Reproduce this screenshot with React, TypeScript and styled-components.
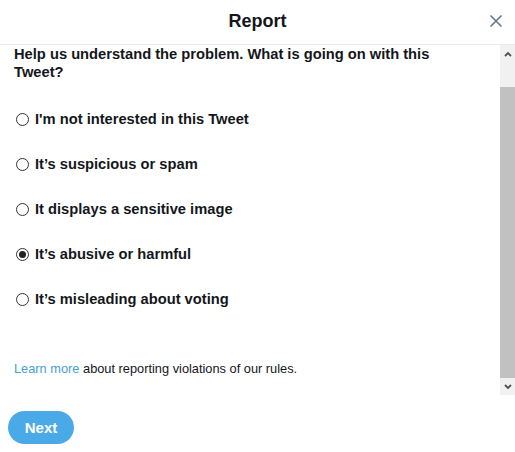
import React, { useState } from 'react';
import styled, { createGlobalStyle } from 'styled-components';

const GlobalStyle = createGlobalStyle`
  html, body {
    margin: 0;
    padding: 0;
    background: #ffffff;
    font-family: "Liberation Sans", Arial, sans-serif;
  }
`

const Dialog = styled.div`
  width: 515px;
  height: 452px;
  display: flex;
  flex-direction: column;
  background: #ffffff;
  color: #14171a;
`

const Header = styled.div`
  height: 44px;
  flex-shrink: 0;
  display: grid;
  grid-template-columns: 60px 1fr 60px;
  align-items: center;
  border-bottom: 1px solid #e6ecf0;
`

const Title = styled.h1`
  grid-column: 2;
  margin: 0 0 2px 0;
  text-align: center;
  font-size: 18px;
  font-weight: bold;
  color: #14171a;
`

const CloseBtn = styled.button`
  justify-self: end;
  margin: 0 8px 2px 0;
  width: 22px;
  height: 22px;
  padding: 0;
  border: none;
  background: none;
  display: flex;
  align-items: center;
  justify-content: center;
`

const Body = styled.div`
  height: 350px;
  flex-shrink: 0;
  display: flex;
`

const Content = styled.div`
  flex: 1;
  padding: 0 14px;
  display: flex;
  flex-direction: column;
`

const Question = styled.p`
  margin: 0;
  max-width: 440px;
  font-size: 14.7px;
  font-weight: bold;
  line-height: 18px;
  color: #14171a;
`

const Options = styled.div`
  display: flex;
  flex-direction: column;
  gap: 27px;
  margin-top: 29px;
`

const Option = styled.label`
  display: flex;
  align-items: center;
  height: 18px;
  font-size: 14.7px;
  font-weight: bold;
  color: #14171a;
`

const Radio = styled.input`
  appearance: none;
  box-sizing: border-box;
  width: 13px;
  height: 13px;
  margin: 0 6px 0 2px;
  border: 1px solid #333333;
  border-radius: 50%;
  background: #ffffff;
  display: flex;
  align-items: center;
  justify-content: center;

  &:checked::after {
    content: "";
    width: 7px;
    height: 7px;
    border-radius: 50%;
    background: #222222;
  }
`

const Note = styled.p`
  margin: 53px 0 0 0;
  font-size: 12.8px;
  color: #14171a;
`

const Link = styled.a`
  color: #4a9ed8;
  text-decoration: none;
`

const ScrollBar = styled.div`
  width: 15px;
  background: #f1f1f1;
  display: flex;
  flex-direction: column;
`

const ScrollArrow = styled.div`
  height: 17px;
  display: flex;
  align-items: center;
  justify-content: center;
`

const Thumb = styled.div<{ $top: number }>`
  margin-top: ${p => p.$top}px;
  flex: 1;
  background: #c1c1c1;
`

const Footer = styled.div`
  flex: 1;
  display: flex;
  align-items: flex-start;
  padding: 16px 8px 0 8px;
`

const NextBtn = styled.button`
  height: 33px;
  width: 66px;
  border: none;
  border-radius: 17px;
  background: #4aaae8;
  color: #ffffff;
  font-family: "Liberation Sans", Arial, sans-serif;
  font-size: 15px;
  font-weight: bold;
`

const reasons = [
  "I'm not interested in this Tweet",
  "It’s suspicious or spam",
  "It displays a sensitive image",
  "It’s abusive or harmful",
  "It’s misleading about voting",
]

const App: React.FC = () => {
  const [choice, setChoice] = useState(3)

  return (
    <Dialog>
      <GlobalStyle />
      <Header>
        <Title>Report</Title>
        <CloseBtn type="button">
          <svg width="14" height="14" viewBox="0 0 14 14">
            <path d="M1.5 1.5 L12.5 12.5 M12.5 1.5 L1.5 12.5" stroke="#657786" strokeWidth="1.6" />
          </svg>
        </CloseBtn>
      </Header>
      <Body>
        <Content>
          <Question>Help us understand the problem. What is going on with this Tweet?</Question>
          <Options>
            {reasons.map((r, i) => (
              <Option key={r}>
                <Radio type="radio" name="reason" checked={choice === i} onChange={() => setChoice(i)} />
                {r}
              </Option>
            ))}
          </Options>
          <Note>
            <Link href="#">Learn more</Link> about reporting violations of our rules.
          </Note>
        </Content>
        <ScrollBar>
          <ScrollArrow>
            <svg width="8" height="6" viewBox="0 0 8 6">
              <path d="M1 5 L4 2 L7 5" stroke="#505050" strokeWidth="1.8" fill="none" />
            </svg>
          </ScrollArrow>
          <Thumb $top={25} />
          <ScrollArrow>
            <svg width="8" height="6" viewBox="0 0 8 6">
              <path d="M1 1 L4 4 L7 1" stroke="#505050" strokeWidth="1.8" fill="none" />
            </svg>
          </ScrollArrow>
        </ScrollBar>
      </Body>
      <Footer>
        <NextBtn type="button">Next</NextBtn>
      </Footer>
    </Dialog>
  );
}

export default App;
